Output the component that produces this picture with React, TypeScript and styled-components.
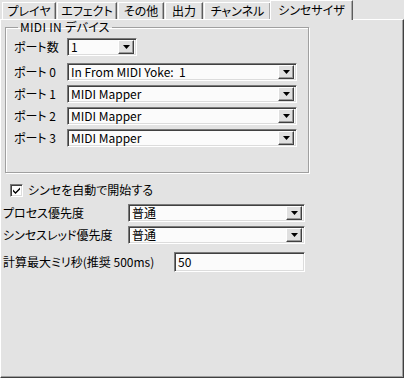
import React from 'react';
import styled, { createGlobalStyle } from 'styled-components';

const GlobalStyle = createGlobalStyle`
  html, body {
    margin: 0;
    padding: 0;
    background: #e3e3e3;
  }
  body {
    font-family: "Noto Sans CJK JP", "Noto Sans", sans-serif;
    font-size: 12px;
    color: #000;
    font-feature-settings: "palt";
  }
`;

const Window = styled.div`
  width: 404px;
  height: 378px;
  display: flex;
  flex-direction: column;
  background: #e3e3e3;
`;

const TabStrip = styled.div`
  display: flex;
  align-items: flex-end;
  height: 19px;
  padding-left: 2px;
  gap: 1px;
`;

const Tab = styled.div<{ $w: number; $active?: boolean }>`
  position: relative;
  z-index: ${p => (p.$active ? 2 : 1)};
  width: ${p => p.$w}px;
  height: ${p => (p.$active ? 20 : 17)}px;
  margin-left: ${p => (p.$active ? -2 : 0)}px;
  margin-bottom: ${p => (p.$active ? -1 : 0)}px;
  box-sizing: border-box;
  border-top: 1px solid #ffffff;
  border-left: 1px solid #ffffff;
  border-right: 1px solid #5c5c5c;
  box-shadow: inset -1px 0 0 #a8a8a8;
  background: #e3e3e3;
  display: flex;
  align-items: center;
  justify-content: center;
  padding-bottom: ${p => (p.$active ? 2 : 0)}px;
  line-height: 14px;
  white-space: nowrap;
`;

const Panel = styled.div`
  flex: 1;
  box-sizing: border-box;
  border-top: 1px solid #ffffff;
  border-left: 1px solid #ffffff;
  border-right: 1px solid #404040;
  border-bottom: 1px solid #404040;
  box-shadow: inset -1px -1px 0 #a0a0a0;
  display: flex;
  flex-direction: column;
`;

const GroupBox = styled.fieldset`
  margin: 0 0 0 4px;
  width: 304px;
  box-sizing: border-box;
  padding: 0 0 25px 8px;
  border: 1px solid #a0a0a0;
  box-shadow: inset 1px 1px 0 #ffffff, 1px 1px 0 #ffffff;
  display: flex;
  flex-direction: column;
`;

const Legend = styled.legend`
  margin-left: 4px;
  padding: 0 2px;
  line-height: 14px;
  height: 14px;
  letter-spacing: 0.3px;
`;

const Row = styled.div<{ $mt: number }>`
  display: flex;
  align-items: center;
  margin-top: ${p => p.$mt}px;
`;

const Label = styled.div<{ $w: number }>`
  width: ${p => p.$w}px;
  flex-shrink: 0;
  white-space: nowrap;
  line-height: 14px;
`;

const Field = styled.div<{ $w: number; $h?: number }>`
  width: ${p => p.$w}px;
  height: ${p => p.$h ?? 18}px;
  box-sizing: border-box;
  border: 1px solid;
  border-color: #7a7a7a #ffffff #ffffff #7a7a7a;
  box-shadow: inset 1px 1px 0 #404040, inset -1px -1px 0 #dcdcdc;
  background: #fbfbfb;
  display: flex;
  align-items: center;
  padding: 1px 2px 1px 3px;
`;

const FieldText = styled.span`
  flex: 1;
  line-height: 14px;
  white-space: pre;
`;

const DropButton = styled.div`
  width: 16px;
  height: 14px;
  box-sizing: border-box;
  background: #e0e0e0;
  border: 1px solid;
  border-color: #ffffff #404040 #404040 #ffffff;
  box-shadow: inset -1px -1px 0 #9a9a9a;
  display: flex;
  align-items: center;
  justify-content: center;
`;

const Section = styled.div`
  display: flex;
  flex-direction: column;
  padding-left: 2px;
`;

const CheckRow = styled.label`
  display: flex;
  align-items: center;
  gap: 5px;
  margin: 10px 0 0 7px;
  line-height: 14px;
`;

const CheckBox = styled.span`
  width: 13px;
  height: 13px;
  box-sizing: border-box;
  border: 1px solid;
  border-color: #7a7a7a #ffffff #ffffff #7a7a7a;
  box-shadow: inset 1px 1px 0 #404040, inset -1px -1px 0 #dcdcdc;
  background: #ffffff;
  display: flex;
  align-items: center;
  justify-content: center;
`;

const Combo: React.FC<{ w: number; value: string }> = ({ w, value }) => (
  <Field $w={w}>
    <FieldText>{value}</FieldText>
    <DropButton>
      <svg width="7" height="4" viewBox="0 0 7 4">
        <path d="M0 0h7L3.5 4z" fill="#000" />
      </svg>
    </DropButton>
  </Field>
);

const tabs = [
  { label: 'プレイヤ', w: 54 },
  { label: 'エフェクト', w: 60 },
  { label: 'その他', w: 46 },
  { label: '出力', w: 38 },
  { label: 'チャンネル', w: 67 },
  { label: 'シンセサイザ', w: 83, active: true },
];

const ports = ['In From MIDI Yoke:  1', 'MIDI Mapper', 'MIDI Mapper', 'MIDI Mapper'];

export default function App() {
  return (
    <>
      <GlobalStyle />
      <Window>
        <TabStrip>
          {tabs.map(t => (
            <Tab key={t.label} $w={t.w} $active={t.active}>
              {t.label}
            </Tab>
          ))}
        </TabStrip>
        <Panel>
          <GroupBox>
            <Legend>MIDI IN デバイス</Legend>
            <Row $mt={4}>
              <Label $w={53}>ポート数</Label>
              <Combo w={70} value="1" />
            </Row>
            {ports.map((p, i) => (
              <Row key={i} $mt={i === 0 ? 7 : 4}>
                <Label $w={53}>ポート {i}</Label>
                <Combo w={230} value={p} />
              </Row>
            ))}
          </GroupBox>
          <Section>
            <CheckRow>
              <CheckBox>
                <svg width="7" height="7" viewBox="0 0 7 7">
                  <path d="M0 2.5l2.5 2.5L7 0.5v2L2.5 7 0 4.5z" fill="#000" />
                </svg>
              </CheckBox>
              シンセを自動で開始する
            </CheckRow>
            <Row $mt={7}>
              <Label $w={125}>プロセス優先度</Label>
              <Combo w={177} value="普通" />
            </Row>
            <Row $mt={4}>
              <Label $w={125}>シンセスレッド優先度</Label>
              <Combo w={177} value="普通" />
            </Row>
            <Row $mt={8}>
              <Label $w={171}>計算最大ミリ秒(推奨 500ms)</Label>
              <Field $w={131} $h={20}>
                <FieldText>50</FieldText>
              </Field>
            </Row>
          </Section>
        </Panel>
      </Window>
    </>
  );
}
